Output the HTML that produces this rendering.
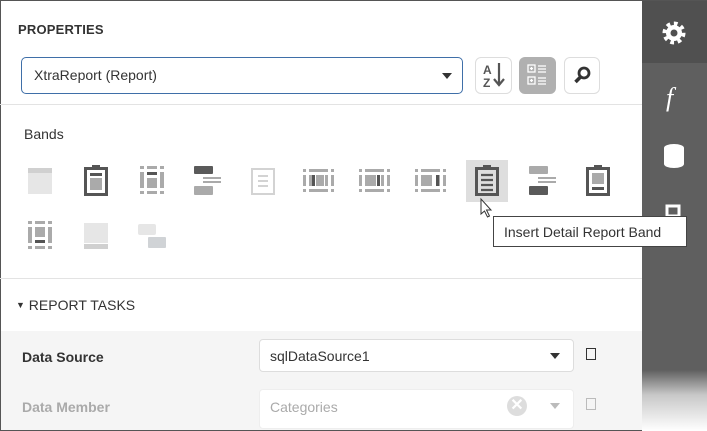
<!DOCTYPE html>
<html><head><meta charset="utf-8"><style>
*{margin:0;padding:0;box-sizing:border-box}
body{width:707px;height:431px;overflow:hidden;background:#fff;font-family:"Liberation Sans",sans-serif;position:relative}
.a{position:absolute}
</style></head><body>
<div class="a" style="left:0;top:0;width:707px;height:431px;border:1px solid #555;border-right:none"></div>
<div class="a" style="left:642px;top:0;width:65px;height:431px;background:linear-gradient(#5f5f5f 0,#5f5f5f 370px,#c8c8c8 395px,#fff 431px)"></div>
<div class="a" style="left:642px;top:0;width:65px;height:63px;background:#505050"></div>
<div class="a" style="left:0;top:0;width:707px;height:1px;background:#555"></div>
<div class="a" style="left:0;top:430px;width:642px;height:1px;background:#555"></div>
<div class="a" style="left:18px;top:22px;font-size:13px;color:#333;font-weight:bold;letter-spacing:0.2px">PROPERTIES</div>
<div class="a" style="left:21px;top:57px;width:442px;height:37px;border:1px solid #3f6fa8;border-radius:5px"></div>
<div class="a" style="left:34px;top:67px;font-size:14px;color:#333">XtraReport (Report)</div>
<div class="a" style="left:442px;top:73px;border-left:5px solid transparent;border-right:5px solid transparent;border-top:6px solid #333"></div>
<div class="a" style="left:475px;top:57px;width:37px;height:37px;border:1px solid #ddd;border-radius:6px"></div>
<div class="a" style="left:519px;top:57px;width:37px;height:37px;background:#b0b0b0;border-radius:6px"></div>
<div class="a" style="left:564px;top:57px;width:36px;height:37px;border:1px solid #ddd;border-radius:6px"></div>
<svg class="a" style="left:0;top:0" width="707" height="431">
<text x="483" y="74" font-size="12" font-weight="bold" fill="#555" font-family="Liberation Sans">A</text>
<text x="483" y="87" font-size="12" font-weight="bold" fill="#555" font-family="Liberation Sans">Z</text>
<path d="M499 63v21M494 79l5 6 5-6" stroke="#555" stroke-width="2.2" fill="none"/>
<g fill="none" stroke="#fff" stroke-width="1.3"><rect x="528" y="65" width="7" height="7"/><rect x="528" y="77" width="7" height="7"/></g>
<g stroke="#fff" stroke-width="1.3"><path d="M538 66h8M538 69h8M538 72h8M538 78h8M538 81h8M538 84h8"/><path d="M530 68.5h3M531.5 67v3M530 80.5h3M531.5 79v3"/></g>
<circle cx="584" cy="73" r="5" fill="none" stroke="#333" stroke-width="2.8"/><path d="M580.5 77l-5 5" stroke="#333" stroke-width="3.5"/>
<g transform="translate(674,33)"><circle r="9" fill="none" stroke="#fff" stroke-width="5" stroke-dasharray="3.5 3.5"/><circle r="8" fill="#fff"/><circle r="3.5" fill="#505050"/></g>
<text x="666" y="106" font-size="26" font-style="italic" fill="#fff" font-family="Liberation Serif">f</text>
<path d="M664 148v16a10 4 0 0 0 20 0v-16a10 4 0 0 0-20 0z" fill="#fff"/>
<rect x="667" y="206" width="12" height="10" fill="none" stroke="#fff" stroke-width="3"/>
<rect x="28" y="168" width="24" height="26" fill="#e6e6e6"/><rect x="28" y="168" width="24" height="5" fill="#d0d0d0"/>
<g transform="translate(84,165)"><rect x="1.5" y="3.5" width="21" height="26" fill="none" stroke="#555" stroke-width="3"/><rect x="8" y="0" width="8" height="4" fill="#555"/><rect x="6" y="8" width="12" height="3" fill="#555"/><rect x="6" y="13" width="12" height="12" fill="#aaa"/></g>
<g transform="translate(140,166)" fill="#aaa"><rect x="0" y="0" width="4" height="3"/><rect x="20" y="0" width="4" height="3"/><rect x="7" y="0" width="10" height="3"/><rect x="0" y="6" width="4" height="16"/><rect x="20" y="6" width="4" height="16"/><rect x="7" y="6" width="10" height="3" fill="#555"/><rect x="7" y="12" width="10" height="10"/><rect x="0" y="25" width="4" height="3"/><rect x="7" y="25" width="10" height="3"/><rect x="20" y="25" width="4" height="3"/></g>
<g transform="translate(194,166)"><rect x="0" y="0" width="19" height="8" rx="1" fill="#5a5a5a"/><rect x="9" y="11" width="18" height="2" fill="#aaa"/><rect x="9" y="15" width="18" height="2" fill="#aaa"/><rect x="0" y="20" width="19" height="9" rx="1" fill="#aaa"/></g>
<g transform="translate(251,168)"><rect x="1" y="1" width="22" height="25" fill="none" stroke="#d3d3d3" stroke-width="2"/><path d="M7 8h10M7 13h10M7 18h10" stroke="#d3d3d3" stroke-width="2"/></g>
<g id="f1" transform="translate(303,169)" fill="#aaa"><rect x="0" y="0" width="3" height="3"/><rect x="6" y="0" width="19" height="3"/><rect x="28" y="0" width="3" height="3"/><rect x="0" y="6" width="3" height="11"/><rect x="28" y="6" width="3" height="11"/><rect x="6" y="6" width="3" height="11"/><rect x="22" y="6" width="3" height="11"/><rect x="0" y="20" width="3" height="3"/><rect x="6" y="20" width="19" height="3"/><rect x="28" y="20" width="3" height="3"/></g>
<rect x="312" y="175" width="3" height="11" fill="#555"/><rect x="316" y="175" width="8" height="11" fill="#aaa"/>
<use href="#f1" x="56"/><rect x="368" y="175" width="8" height="11" fill="#aaa"/><rect x="377" y="175" width="3" height="11" fill="#555"/>
<use href="#f1" x="112"/><rect x="424" y="175" width="8" height="11" fill="#aaa"/><rect x="436" y="175" width="3" height="11" fill="#555"/>
<rect x="466" y="160" width="42" height="42" fill="#dedede"/>
<g transform="translate(475,165)"><rect x="1.5" y="3.5" width="21" height="26" fill="none" stroke="#555" stroke-width="3"/><rect x="8" y="0" width="8" height="4" fill="#555"/><path d="M6 10h12M6 15h12M6 20h12M6 25h12" stroke="#555" stroke-width="2.2"/></g>
<g transform="translate(529,166)"><rect x="0" y="0" width="19" height="8" rx="1" fill="#aaa"/><rect x="9" y="11" width="18" height="2" fill="#aaa"/><rect x="9" y="15" width="18" height="2" fill="#aaa"/><rect x="0" y="20" width="19" height="9" rx="1" fill="#5a5a5a"/></g>
<g transform="translate(586,165)"><rect x="1.5" y="3.5" width="21" height="26" fill="none" stroke="#555" stroke-width="3"/><rect x="8" y="0" width="8" height="4" fill="#555"/><rect x="6" y="8" width="12" height="11" fill="#aaa"/><rect x="6" y="22" width="12" height="3" fill="#555"/></g>
<g transform="translate(28,221)" fill="#aaa"><rect x="0" y="0" width="4" height="3"/><rect x="7" y="0" width="10" height="3"/><rect x="20" y="0" width="4" height="3"/><rect x="0" y="6" width="4" height="16"/><rect x="20" y="6" width="4" height="16"/><rect x="7" y="6" width="10" height="10"/><rect x="7" y="19" width="10" height="3" fill="#555"/><rect x="0" y="25" width="4" height="3"/><rect x="7" y="25" width="10" height="3"/><rect x="20" y="25" width="4" height="3"/></g>
<rect x="84" y="223" width="24" height="20" fill="#e6e6e6"/><rect x="84" y="244" width="24" height="5" fill="#d0d0d0"/>
<rect x="138" y="224" width="18" height="11" rx="2" fill="#e6e6e6"/><rect x="148" y="237" width="18" height="11" rx="1" fill="#d0d3d6"/>
<path d="M481 199v15l3.5-3 3 6 2-1-3-6h4.5z" fill="#fff" stroke="#333" stroke-width="1"/>
</svg>
<div class="a" style="left:0;top:104px;width:642px;height:1px;background:#e3e3e3"></div>
<div class="a" style="left:24px;top:126px;font-size:14px;color:#333">Bands</div>
<div class="a" style="left:493px;top:216px;width:194px;height:31px;background:#fff;border:1px solid #444;font-size:14px;color:#333;padding:7px 0 0 10px">Insert Detail Report Band</div>
<div class="a" style="left:0;top:278px;width:642px;height:1px;background:#e3e3e3"></div>
<div class="a" style="left:16px;top:297px;font-size:14px;color:#333"><span style="font-size:9px;vertical-align:2px">▼</span> REPORT TASKS</div>
<div class="a" style="left:1px;top:331px;width:641px;height:99px;background:#f5f5f5"></div>
<div class="a" style="left:22px;top:349px;font-size:14px;font-weight:bold;color:#333">Data Source</div>
<div class="a" style="left:259px;top:339px;width:315px;height:33px;background:#fff;border:1px solid #ddd;border-radius:4px;font-size:14px;color:#333;padding:8px 0 0 10px">sqlDataSource1</div>
<div class="a" style="left:550px;top:353px;border-left:5px solid transparent;border-right:5px solid transparent;border-top:6px solid #333"></div>
<div class="a" style="left:586px;top:348px;width:10px;height:12px;border:1px solid #333"></div>
<div class="a" style="left:22px;top:399px;font-size:14px;font-weight:bold;color:#aaa">Data Member</div>
<div class="a" style="left:259px;top:389px;width:315px;height:40px;background:#fff;border:1px solid #eee;border-radius:4px;font-size:14px;color:#aaa;padding:9px 0 0 10px">Categories</div>
<div class="a" style="left:507px;top:396px;width:20px;height:20px;border-radius:50%;background:#ddd;color:#fff;font-size:16px;font-weight:bold;text-align:center;line-height:20px">✕</div>
<div class="a" style="left:550px;top:403px;border-left:5px solid transparent;border-right:5px solid transparent;border-top:6px solid #bbb"></div>
<div class="a" style="left:586px;top:398px;width:10px;height:12px;border:1px solid #bbb"></div>
</body></html>
